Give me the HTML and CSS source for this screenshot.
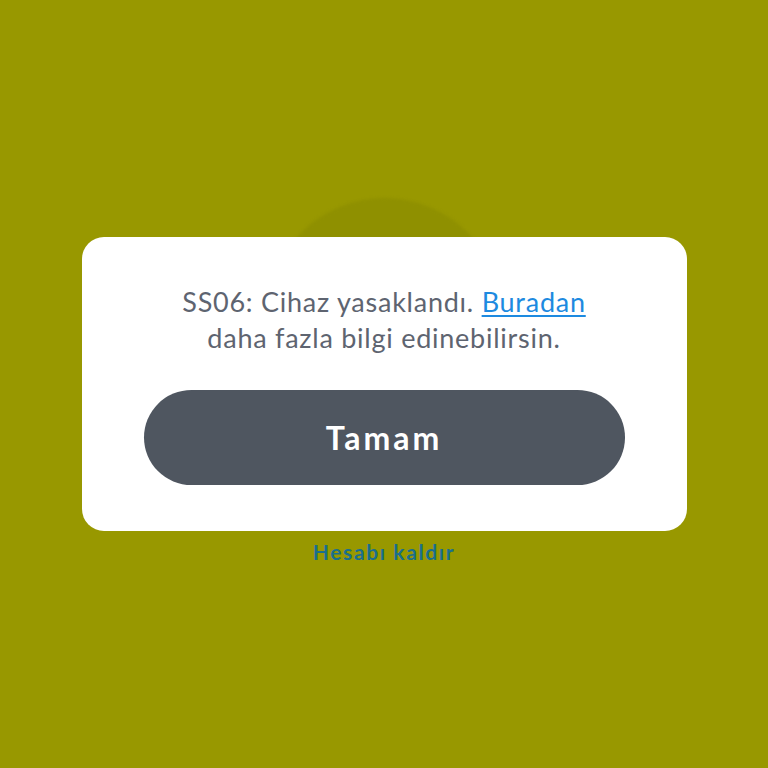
FILE: index.html
```html
<!DOCTYPE html>
<html lang="tr">
<head>
<meta charset="utf-8">
<title>Hata</title>
<link rel="stylesheet" href="styles.css">
</head>
<body>
<div class="screen">
  <div class="avatar"></div>
  <div class="stack">
    <div class="card">
      <p class="msg">SS06: Cihaz yasaklandı. <a class="link" href="#">Buradan</a><br>daha fazla bilgi edinebilirsin.</p>
      <button class="btn">Tamam</button>
    </div>
    <a class="remove" href="#">Hesabı kaldır</a>
  </div>
</div>
</body>
</html>
```
FILE: styles.css
```css
html, body {
  margin: 0;
  padding: 0;
}
body {
  width: 768px;
  height: 768px;
  background: #989800;
  font-family: Lato, "Open Sans", sans-serif;
  overflow: hidden;
}
.screen {
  position: relative;
  width: 768px;
  height: 768px;
  display: flex;
  flex-direction: column;
  align-items: center;
}
.avatar {
  position: absolute;
  left: 267px;
  top: 198px;
  width: 235px;
  height: 235px;
  border-radius: 50%;
  background: #8f9000;
  filter: blur(1.5px);
}
.stack {
  position: relative;
  margin-top: 237px;
  display: flex;
  flex-direction: column;
  align-items: center;
}
.card {
  width: 605px;
  height: 294px;
  box-sizing: border-box;
  background: #fff;
  border-radius: 22px;
  display: flex;
  flex-direction: column;
  align-items: center;
  padding-top: 47px;
}
.msg {
  margin: 0;
  text-align: center;
  font-size: 27px;
  line-height: 36px;
  color: #5e6470;
  letter-spacing: 0.75px;
}
.link {
  color: #1d8ae0;
  text-decoration: underline;
  text-decoration-thickness: 2px;
  text-underline-offset: 3px;
}
.btn {
  margin-top: 34px;
  width: 481px;
  height: 95px;
  border: none;
  border-radius: 48px;
  background: #4f5660;
  color: #fff;
  font-family: Lato, "Open Sans", sans-serif;
  font-weight: 700;
  font-size: 32px;
  letter-spacing: 3px;
  padding: 0;
}
.remove {
  margin-top: 8px;
  font-size: 21px;
  font-weight: 700;
  color: #1a6f8c;
  text-decoration: none;
  line-height: 26px;
  letter-spacing: 1.6px;
}
```
